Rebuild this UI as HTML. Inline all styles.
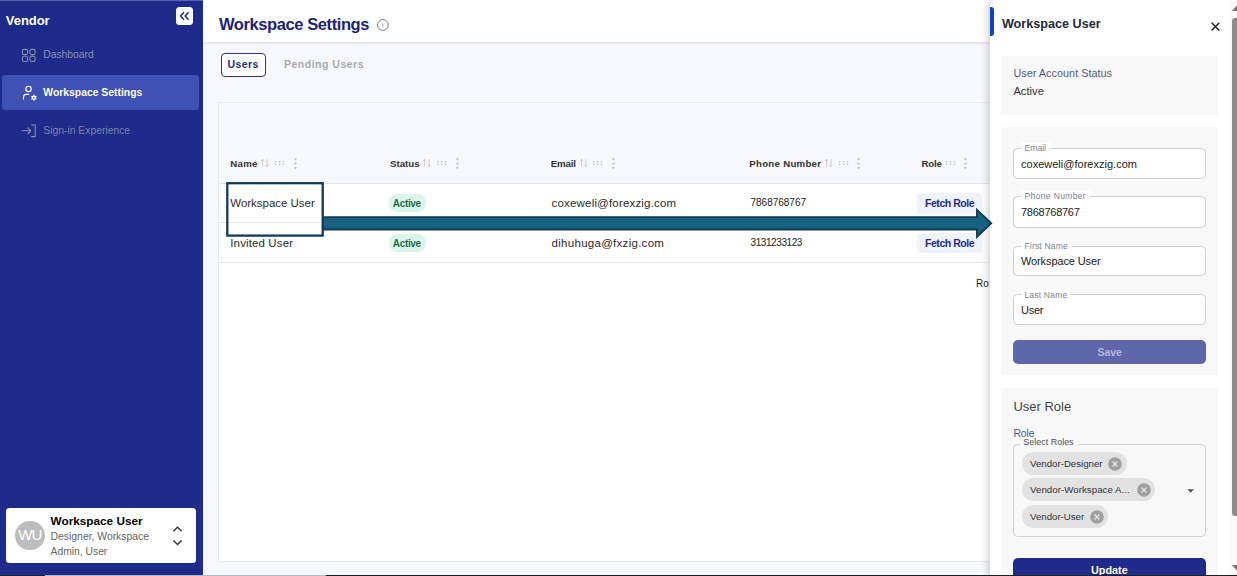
<!DOCTYPE html>
<html lang="en"><head><meta charset="utf-8"><title>Workspace Settings</title>
<style>
*{box-sizing:border-box;margin:0;padding:0}
html,body{width:1237px;height:576px;overflow:hidden;background:#f7f8fd;font-family:"Liberation Sans",sans-serif}
#root{position:relative;width:1237px;height:576px;overflow:hidden}
#root div,#root svg{position:absolute;white-space:nowrap}
.t{white-space:pre}
#hdr{left:203px;top:0;width:1034px;height:42px;background:#fff;box-shadow:0 1px 3px rgba(0,0,0,.13)}
#tabU{left:221.2px;top:52.8px;width:44.4px;height:24.2px;border:1px solid #2a3590;border-radius:4px;background:#fff}
#card{left:218px;top:102px;width:1012px;height:460px;border:1px solid #e6e8f2;background:#fff}
#thead{left:219px;top:103px;width:1010px;height:80px;background:#f7f8fd}
.hl{left:219px;width:1010px;height:1px;background:#e4e5ea}
.badge{left:389px;width:36.5px;height:18px;border-radius:8px;background:#dcf5ea}
.fetch{left:916.5px;width:65.5px;height:20.8px;border-radius:4px;background:#f0f2fb}
#side{left:0;top:0;width:203px;height:576px;background:#1e2b8a}
#navact{left:2px;top:75px;width:197px;height:35px;background:#3f51b5;border-radius:3px}
#collapse{left:175.6px;top:7.3px;width:17.4px;height:17.7px;background:#fff;border-radius:3.5px}
#ucard{left:5.8px;top:508px;width:190.5px;height:54.5px;background:#fff;border-radius:3.5px}
#avatar{left:15px;top:520.6px;width:29.8px;height:29.8px;border-radius:50%;background:#bdbdbd}
#panel{left:989px;top:0;width:249px;height:576px;background:#fff;border-left:1px solid #dcdcde;border-top-left-radius:6px;box-shadow:-2px 0 7px rgba(0,0,0,.16)}
.sec{left:1001px;width:216.8px;background:#f8f8f9}
.inp{left:1013.3px;width:192.5px;border:1px solid #cfcfd5;border-radius:4.5px;background:#fff}
.lb{height:11px;background:#fff}
.btn{left:1012.8px;width:193.2px;border-radius:5px}
.chip{left:1021.5px;border-radius:11.5px;background:#e2e2e2}
</style></head><body>
<div id="root">
 <div id="hdr"></div>
 <svg style="left:376px;top:18px" width="14" height="14" viewBox="0 0 14 14"><circle cx="6.9" cy="7" r="5.4" fill="#fff" stroke="#60606a" stroke-width=".8"/><rect x="6.4" y="5.2" width="1" height="3.8" fill="#aaaab2"/></svg>
 <div id="tabU"></div>
 <div id="card"></div><div id="thead"></div>
 <div class="hl" style="top:183px"></div>
 <div class="hl" style="top:222.3px;background:#e9e9ee"></div>
 <div class="hl" style="top:262.3px;background:#e9e9ee"></div>
 <div class="badge" style="top:194px"></div><div class="badge" style="top:234px"></div>
 <div class="fetch" style="top:192.8px"></div><div class="fetch" style="top:232.5px"></div>
 <svg style="left:260.3px;top:157.9px" width="10" height="10" viewBox="0 0 10 10"><path d="M2.6 8.6V1.4M0.8 3.2L2.6 1.3L4.4 3.2M7 1.2V8.6M5.2 6.8L7 8.7L8.8 6.8" fill="none" stroke="#bdbdc5" stroke-width=".75"/></svg>
<svg style="left:274.9px;top:161px" width="10" height="5" viewBox="0 0 10 5"><rect x="0" y="0" width="1.4" height="1.4" fill="#c2c2cb"/><rect x="0" y="2.6" width="1.4" height="1.4" fill="#c2c2cb"/><rect x="3.9" y="0" width="1.4" height="1.4" fill="#c2c2cb"/><rect x="3.9" y="2.6" width="1.4" height="1.4" fill="#c2c2cb"/><rect x="7.8" y="0" width="1.4" height="1.4" fill="#c2c2cb"/><rect x="7.8" y="2.6" width="1.4" height="1.4" fill="#c2c2cb"/></svg>
<svg style="left:293.7px;top:158px" width="3" height="11" viewBox="0 0 2.4 10.8"><circle cx="1.2" cy="1.2" r="1.1" fill="#bdbdc6"/><circle cx="1.2" cy="5.4" r="1.1" fill="#bdbdc6"/><circle cx="1.2" cy="9.6" r="1.1" fill="#bdbdc6"/></svg>
<svg style="left:422.1px;top:157.9px" width="10" height="10" viewBox="0 0 10 10"><path d="M2.6 8.6V1.4M0.8 3.2L2.6 1.3L4.4 3.2M7 1.2V8.6M5.2 6.8L7 8.7L8.8 6.8" fill="none" stroke="#bdbdc5" stroke-width=".75"/></svg>
<svg style="left:436.7px;top:161px" width="10" height="5" viewBox="0 0 10 5"><rect x="0" y="0" width="1.4" height="1.4" fill="#c2c2cb"/><rect x="0" y="2.6" width="1.4" height="1.4" fill="#c2c2cb"/><rect x="3.9" y="0" width="1.4" height="1.4" fill="#c2c2cb"/><rect x="3.9" y="2.6" width="1.4" height="1.4" fill="#c2c2cb"/><rect x="7.8" y="0" width="1.4" height="1.4" fill="#c2c2cb"/><rect x="7.8" y="2.6" width="1.4" height="1.4" fill="#c2c2cb"/></svg>
<svg style="left:455.5px;top:158px" width="3" height="11" viewBox="0 0 2.4 10.8"><circle cx="1.2" cy="1.2" r="1.1" fill="#bdbdc6"/><circle cx="1.2" cy="5.4" r="1.1" fill="#bdbdc6"/><circle cx="1.2" cy="9.6" r="1.1" fill="#bdbdc6"/></svg>
<svg style="left:578.5px;top:157.9px" width="10" height="10" viewBox="0 0 10 10"><path d="M2.6 8.6V1.4M0.8 3.2L2.6 1.3L4.4 3.2M7 1.2V8.6M5.2 6.8L7 8.7L8.8 6.8" fill="none" stroke="#bdbdc5" stroke-width=".75"/></svg>
<svg style="left:593.1px;top:161px" width="10" height="5" viewBox="0 0 10 5"><rect x="0" y="0" width="1.4" height="1.4" fill="#c2c2cb"/><rect x="0" y="2.6" width="1.4" height="1.4" fill="#c2c2cb"/><rect x="3.9" y="0" width="1.4" height="1.4" fill="#c2c2cb"/><rect x="3.9" y="2.6" width="1.4" height="1.4" fill="#c2c2cb"/><rect x="7.8" y="0" width="1.4" height="1.4" fill="#c2c2cb"/><rect x="7.8" y="2.6" width="1.4" height="1.4" fill="#c2c2cb"/></svg>
<svg style="left:611.9px;top:158px" width="3" height="11" viewBox="0 0 2.4 10.8"><circle cx="1.2" cy="1.2" r="1.1" fill="#bdbdc6"/><circle cx="1.2" cy="5.4" r="1.1" fill="#bdbdc6"/><circle cx="1.2" cy="9.6" r="1.1" fill="#bdbdc6"/></svg>
<svg style="left:824.0px;top:157.9px" width="10" height="10" viewBox="0 0 10 10"><path d="M2.6 8.6V1.4M0.8 3.2L2.6 1.3L4.4 3.2M7 1.2V8.6M5.2 6.8L7 8.7L8.8 6.8" fill="none" stroke="#bdbdc5" stroke-width=".75"/></svg>
<svg style="left:838.6px;top:161px" width="10" height="5" viewBox="0 0 10 5"><rect x="0" y="0" width="1.4" height="1.4" fill="#c2c2cb"/><rect x="0" y="2.6" width="1.4" height="1.4" fill="#c2c2cb"/><rect x="3.9" y="0" width="1.4" height="1.4" fill="#c2c2cb"/><rect x="3.9" y="2.6" width="1.4" height="1.4" fill="#c2c2cb"/><rect x="7.8" y="0" width="1.4" height="1.4" fill="#c2c2cb"/><rect x="7.8" y="2.6" width="1.4" height="1.4" fill="#c2c2cb"/></svg>
<svg style="left:857.4px;top:158px" width="3" height="11" viewBox="0 0 2.4 10.8"><circle cx="1.2" cy="1.2" r="1.1" fill="#bdbdc6"/><circle cx="1.2" cy="5.4" r="1.1" fill="#bdbdc6"/><circle cx="1.2" cy="9.6" r="1.1" fill="#bdbdc6"/></svg>
<svg style="left:945.5px;top:161px" width="10" height="5" viewBox="0 0 10 5"><rect x="0" y="0" width="1.4" height="1.4" fill="#c2c2cb"/><rect x="0" y="2.6" width="1.4" height="1.4" fill="#c2c2cb"/><rect x="3.9" y="0" width="1.4" height="1.4" fill="#c2c2cb"/><rect x="3.9" y="2.6" width="1.4" height="1.4" fill="#c2c2cb"/><rect x="7.8" y="0" width="1.4" height="1.4" fill="#c2c2cb"/><rect x="7.8" y="2.6" width="1.4" height="1.4" fill="#c2c2cb"/></svg>
<svg style="left:964.3px;top:158px" width="3" height="11" viewBox="0 0 2.4 10.8"><circle cx="1.2" cy="1.2" r="1.1" fill="#bdbdc6"/><circle cx="1.2" cy="5.4" r="1.1" fill="#bdbdc6"/><circle cx="1.2" cy="9.6" r="1.1" fill="#bdbdc6"/></svg>
<div class="t" id="t0" style="left:219.0px;top:13.58px;font-size:16.5px;line-height:20px;color:#1b2478;font-weight:bold;letter-spacing:-0.412px;">Workspace Settings</div>
<div class="t" id="t1" style="left:227.4px;top:54.36px;font-size:10.5px;line-height:20px;color:#1e2b8a;font-weight:bold;letter-spacing:0.419px;">Users</div>
<div class="t" id="t2" style="left:284.0px;top:53.56px;font-size:10.5px;line-height:20px;color:#a9a9ad;font-weight:bold;letter-spacing:0.498px;">Pending Users</div>
<div class="t" id="t3" style="left:230.3px;top:154.34px;font-size:9.7px;line-height:20px;color:#333;font-weight:bold;letter-spacing:0.252px;">Name</div>
<div class="t" id="t4" style="left:390.1px;top:154.34px;font-size:9.7px;line-height:20px;color:#333;font-weight:bold;letter-spacing:-0.035px;">Status</div>
<div class="t" id="t5" style="left:550.7px;top:154.34px;font-size:9.7px;line-height:20px;color:#333;font-weight:bold;letter-spacing:-0.132px;">Email</div>
<div class="t" id="t6" style="left:749.3px;top:154.34px;font-size:9.7px;line-height:20px;color:#333;font-weight:bold;letter-spacing:0.258px;">Phone Number</div>
<div class="t" id="t7" style="left:921.4px;top:154.34px;font-size:9.7px;line-height:20px;color:#333;font-weight:bold;letter-spacing:-0.175px;">Role</div>
<div class="t" id="t8" style="left:230.3px;top:193.22px;font-size:11.5px;line-height:20px;color:#2a2a2a;letter-spacing:-0.028px;">Workspace User</div>
<div class="t" id="t9" style="left:230.3px;top:232.72px;font-size:11.5px;line-height:20px;color:#2a2a2a;letter-spacing:0.120px;">Invited User</div>
<div class="t" id="t10" style="left:392.8px;top:193.73px;font-size:10px;line-height:20px;color:#1d6b50;font-weight:bold;letter-spacing:-0.336px;">Active</div>
<div class="t" id="t11" style="left:392.8px;top:233.73px;font-size:10px;line-height:20px;color:#1d6b50;font-weight:bold;letter-spacing:-0.336px;">Active</div>
<div class="t" id="t12" style="left:551.6px;top:192.72px;font-size:11.5px;line-height:20px;color:#2a2a2a;letter-spacing:0.178px;">coxeweli@forexzig.com</div>
<div class="t" id="t13" style="left:551.6px;top:232.72px;font-size:11.5px;line-height:20px;color:#2a2a2a;letter-spacing:0.279px;">dihuhuga@fxzig.com</div>
<div class="t" id="t14" style="left:750.5px;top:192.53px;font-size:10px;line-height:20px;color:#222;letter-spacing:-0.013px;">7868768767</div>
<div class="t" id="t15" style="left:750.5px;top:232.53px;font-size:10px;line-height:20px;color:#222;letter-spacing:-0.412px;">3131233123</div>
<div class="t" id="t16" style="left:925.0px;top:192.56px;font-size:10.5px;line-height:20px;color:#1e2b8a;font-weight:bold;letter-spacing:-0.449px;">Fetch Role</div>
<div class="t" id="t17" style="left:925.0px;top:232.96px;font-size:10.5px;line-height:20px;color:#1e2b8a;font-weight:bold;letter-spacing:-0.449px;">Fetch Role</div>
<div class="t" id="t18" style="left:976.0px;top:274.44px;font-size:10px;line-height:20px;color:#222;">Rows per page</div>
 <div id="side"></div>
 <div style="left:0;top:0;width:203px;height:1px;background:#5a64ad"></div>
 <div id="collapse"><svg style="left:3px;top:3.6px" width="11" height="10" viewBox="0 0 11 10"><path d="M5 1.2L1.6 5L5 8.8M9.6 1.2L6.2 5L9.6 8.8" fill="none" stroke="#1e2b8a" stroke-width="1.5"/></svg></div>
 <div id="navact"></div>
 
 <svg style="left:21px;top:47.5px" width="16" height="15" viewBox="21 47.5 16 15"><g fill="none" stroke="#8d8fa3" stroke-width="1.1"><rect x="22.4" y="48.9" width="5.2" height="5.2" rx="1.6"/><rect x="29.9" y="48.9" width="5.2" height="5.2" rx="1.6"/><rect x="22.4" y="55.8" width="5.2" height="5.2" rx="1.6"/><rect x="29.9" y="55.8" width="5.2" height="5.2" rx="1.6"/></g></svg>
 <svg style="left:21px;top:84px" width="18" height="18" viewBox="21 84 18 18"><g fill="none" stroke="#fff" stroke-width="1.15"><circle cx="28.5" cy="88.9" r="2.7"/><path d="M23.5 99.6V97.2A2.8 2.8 0 0 1 26.3 94.4H29.2"/></g><circle cx="33.9" cy="97.7" r="2.1" fill="#fff"/><g stroke="#fff" stroke-width="1.2"><path d="M33.9 94.7V100.7M31.3 96.2L36.5 99.2M31.3 99.2L36.5 96.2"/></g><circle cx="33.9" cy="97.7" r=".8" fill="#3f51b5"/></svg>
 <svg style="left:20px;top:123px" width="18" height="16" viewBox="20 123 18 16"><g fill="none" stroke="#8d8fa3" stroke-width="1.1"><path d="M21.5 130.8H30.5M27.6 127.6L30.8 130.8L27.6 134"/><path d="M31.2 125H35.2V136.6H31.2"/></g></svg>

 <div id="ucard"></div><div id="avatar"></div>
 <svg style="left:171px;top:524px" width="13" height="24" viewBox="171 524 13 24"><path d="M173.4 531.2L177.5 527.2L181.6 531.2M173.4 540.4L177.5 544.4L181.6 540.4" fill="none" stroke="#333" stroke-width="1.4"/></svg>
<div class="t" id="t19" style="left:5.8px;top:10.50px;font-size:13px;line-height:20px;color:#fff;font-weight:bold;letter-spacing:-0.046px;">Vendor</div>
<div class="t" id="t20" style="left:43.3px;top:45.41px;font-size:10.35px;line-height:20px;color:#8b8fae;letter-spacing:-0.023px;">Dashboard</div>
<div class="t" id="t21" style="left:43.3px;top:83.21px;font-size:10.35px;line-height:20px;color:#fff;font-weight:bold;letter-spacing:0.017px;">Workspace Settings</div>
<div class="t" id="t22" style="left:43.3px;top:121.21px;font-size:10.35px;line-height:20px;color:#7d82a8;">Sign-in Experience</div>
<div class="t" id="t23" style="left:18.3px;top:524.80px;font-size:15px;line-height:20px;color:#fff;letter-spacing:-0.850px;">WU</div>
<div class="t" id="t24" style="left:50.6px;top:510.53px;font-size:11.75px;line-height:20px;color:#000;font-weight:bold;letter-spacing:0.009px;">Workspace User</div>
<div class="t" id="t25" style="left:50.6px;top:526.80px;font-size:10.4px;line-height:20px;color:#666;letter-spacing:-0.009px;">Designer, Workspace</div>
<div class="t" id="t26" style="left:50.6px;top:541.70px;font-size:10.4px;line-height:20px;color:#666;letter-spacing:-0.043px;">Admin, User</div>
 <div id="panel"></div>
 <div style="left:989.5px;top:6.8px;width:4.7px;height:29.7px;background:#1141c1;border-radius:0 3px 3px 0"></div>
 <svg style="left:1209px;top:20px" width="13" height="13" viewBox="1209 20 13 13"><path d="M1211.6 22.8L1219.3 30.4M1219.3 22.8L1211.6 30.4" stroke="#222" stroke-width="1.4" fill="none"/></svg>
 <div class="sec" style="top:56px;height:58.6px"></div>
 <div class="sec" style="top:126.8px;height:248px"></div>
 <div class="sec" style="top:387.5px;height:190px"></div>
 <div class="inp" style="top:148.3px;height:30.7px"></div><div class="lb" style="left:1021px;top:142px;width:28.8px"></div>
 <div class="inp" style="top:195.8px;height:31.9px"></div><div class="lb" style="left:1021px;top:190px;width:68.8px"></div>
 <div class="inp" style="top:245.9px;height:29.7px"></div><div class="lb" style="left:1021px;top:240px;width:50.5px"></div>
 <div class="inp" style="top:294.4px;height:30.6px"></div><div class="lb" style="left:1021px;top:288.5px;width:50px"></div>
 <div class="btn" style="top:339.7px;height:24px;background:#5f67ab"></div>
 <div class="inp" style="top:444px;height:92.6px;background:#f8f8f9"></div><div class="lb" style="left:1019.5px;top:438px;width:58px;background:#f8f8f9"></div>
 <div class="chip" style="top:452px;width:105.5px;height:22.8px"></div>
 <div class="chip" style="top:478.3px;width:133.5px;height:23.2px"></div>
 <div class="chip" style="top:505.1px;width:86.5px;height:23.4px"></div>
 <svg style="left:1108.1px;top:456.5px" width="14" height="14" viewBox="-7 -7 14 14"><circle r="6.8" fill="#a0a0a0"/><path d="M-2.4 -2.4L2.4 2.4M2.4 -2.4L-2.4 2.4" stroke="#e2e2e2" stroke-width="1.4"/></svg>
<svg style="left:1136.7px;top:483.0px" width="14" height="14" viewBox="-7 -7 14 14"><circle r="6.8" fill="#a0a0a0"/><path d="M-2.4 -2.4L2.4 2.4M2.4 -2.4L-2.4 2.4" stroke="#e2e2e2" stroke-width="1.4"/></svg>
<svg style="left:1089.8px;top:509.6px" width="14" height="14" viewBox="-7 -7 14 14"><circle r="6.8" fill="#a0a0a0"/><path d="M-2.4 -2.4L2.4 2.4M2.4 -2.4L-2.4 2.4" stroke="#e2e2e2" stroke-width="1.4"/></svg>
<svg style="left:1186px;top:488px" width="10" height="6" viewBox="0 0 10 6"><path d="M1.3 1.3H8L4.65 4.8Z" fill="#555"/></svg>
 <div class="btn" style="top:558px;height:24px;background:#1e2b8a"></div>
<div class="t" id="t27" style="left:1001.9px;top:13.83px;font-size:12.6px;line-height:20px;color:#1e293b;font-weight:bold;letter-spacing:0.024px;">Workspace User</div>
<div class="t" id="t28" style="left:1013.4px;top:62.62px;font-size:10.9px;line-height:20px;color:#555b85;">User Account Status</div>
<div class="t" id="t29" style="left:1013.4px;top:80.92px;font-size:11.2px;line-height:20px;color:#333;letter-spacing:0.005px;">Active</div>
<div class="t" id="t30" style="left:1024.6px;top:137.65px;font-size:8.5px;line-height:20px;color:#7b8190;letter-spacing:0.027px;">Email</div>
<div class="t" id="t31" style="left:1021.0px;top:153.89px;font-size:11px;line-height:20px;color:#222;letter-spacing:0.013px;">coxeweli@forexzig.com</div>
<div class="t" id="t32" style="left:1024.6px;top:186.25px;font-size:8.5px;line-height:20px;color:#7b8190;letter-spacing:0.352px;">Phone Number</div>
<div class="t" id="t33" style="left:1021.0px;top:201.99px;font-size:11px;line-height:20px;color:#222;letter-spacing:-0.259px;">7868768767</div>
<div class="t" id="t34" style="left:1024.4px;top:235.85px;font-size:8.5px;line-height:20px;color:#7b8190;letter-spacing:0.204px;">First Name</div>
<div class="t" id="t35" style="left:1021.0px;top:251.19px;font-size:11px;line-height:20px;color:#222;letter-spacing:-0.115px;">Workspace User</div>
<div class="t" id="t36" style="left:1024.4px;top:284.55px;font-size:8.5px;line-height:20px;color:#7b8190;letter-spacing:0.210px;">Last Name</div>
<div class="t" id="t37" style="left:1021.0px;top:299.89px;font-size:11px;line-height:20px;color:#222;letter-spacing:-0.259px;">User</div>
<div class="t" id="t38" style="left:1097.6px;top:342.46px;font-size:10.5px;line-height:20px;color:#b5b8d6;font-weight:bold;letter-spacing:-0.133px;">Save</div>
<div class="t" id="t39" style="left:1013.4px;top:396.80px;font-size:13px;line-height:20px;color:#444;">User Role</div>
<div class="t" id="t40" style="left:1013.4px;top:422.86px;font-size:10.5px;line-height:20px;color:#555b85;letter-spacing:-0.127px;">Role</div>
<div class="t" id="t41" style="left:1023.3px;top:432.28px;font-size:9px;line-height:20px;color:#555;letter-spacing:-0.019px;">Select Roles</div>
<div class="t" id="t42" style="left:1030.0px;top:453.64px;font-size:9.7px;line-height:20px;color:#333;letter-spacing:-0.007px;">Vendor-Designer</div>
<div class="t" id="t43" style="left:1030.0px;top:480.14px;font-size:9.7px;line-height:20px;color:#333;letter-spacing:0.043px;">Vendor-Workspace A...</div>
<div class="t" id="t44" style="left:1030.0px;top:506.74px;font-size:9.7px;line-height:20px;color:#333;letter-spacing:-0.017px;">Vendor-User</div>
<div class="t" id="t45" style="left:1091.0px;top:560.26px;font-size:10.8px;line-height:20px;color:#fff;font-weight:bold;letter-spacing:0.018px;">Update</div>
 <svg style="left:220px;top:178px" width="780" height="64" viewBox="220 178 780 64">
  <path d="M323 217.1H977V209.9L991.2 223.3L977 236.7V229.5H323Z" fill="#17607f" stroke="#0f3a58" stroke-width="1.9" stroke-linejoin="miter"/>
  <rect x="227.3" y="183.2" width="95.4" height="52.4" fill="none" stroke="#13395f" stroke-width="2.3"/>
 </svg>
 <div style="left:1229px;top:0;width:9px;height:576px;background:#fafafa"></div>
 <div style="left:1232px;top:17.7px;width:8px;height:498.3px;background:#8c8c8c;border-radius:3px 0 0 3px"></div>
 <svg style="left:1229px;top:3.8px" width="8" height="8" viewBox="0 0 8 8"><path d="M2.7 7L8 1.4V7Z" fill="#777"/></svg>
 <svg style="left:1229px;top:564.2px" width="8" height="8" viewBox="0 0 8 8"><path d="M2.7 1H8V6.6Z" fill="#777"/></svg>
 <div style="left:0;top:575px;width:1237px;height:1px;background:#1c1e24"></div>
 <div style="left:45px;top:575px;width:281px;height:1px;background:#b8b8b8"></div>
</div>
</body></html>
